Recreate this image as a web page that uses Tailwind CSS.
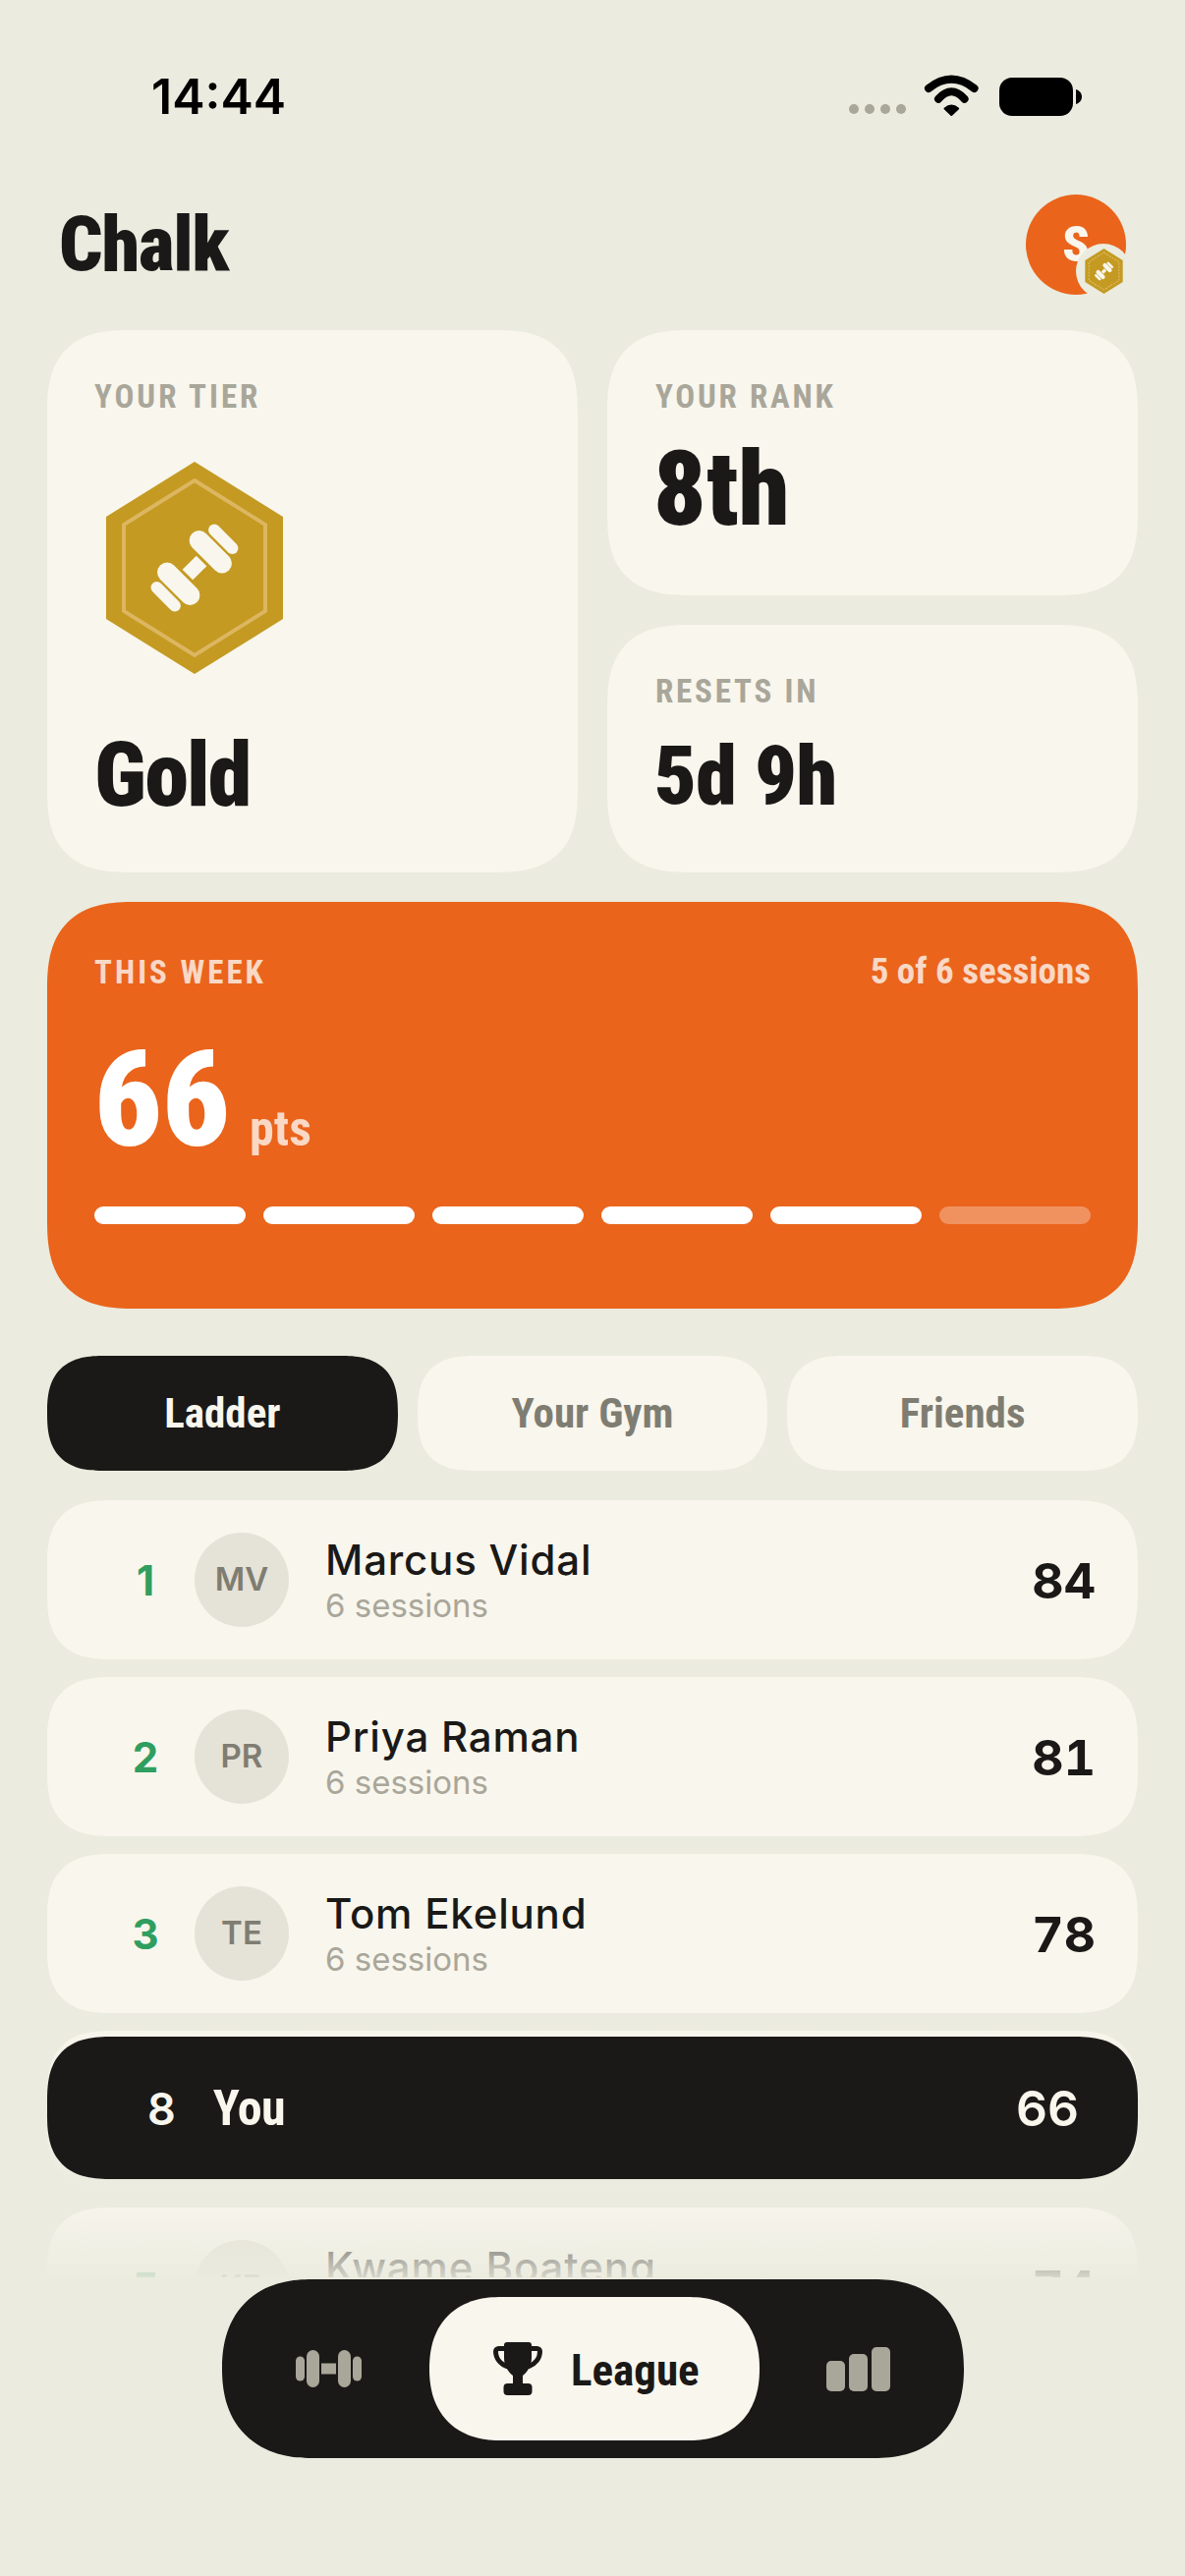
<!doctype html>
<html><head><meta charset="utf-8"><script src="https://cdn.jsdelivr.net/npm/@tailwindcss/browser@4"></script></head>
<body class="bg-[#ebebdf]">
<div class="h-[2622px] w-[1206px] overflow-hidden relative bg-[#ebebdf] font-['Inter',sans-serif] text-[#1a1917]">

  <!-- status bar -->
  <div class="h-[198px] relative">
    <div class="absolute left-[154px] top-[73px] text-[50px] leading-[50px] font-semibold text-black">14:44</div>
    <div class="absolute left-[864px] top-[75px] flex items-start">
      <div class="flex gap-[6px] mt-[31px] mr-[18px]">
        <span class="size-[10px] rounded-full bg-[#a9a69a]"></span><span class="size-[10px] rounded-full bg-[#a9a69a]"></span><span class="size-[10px] rounded-full bg-[#a9a69a]"></span><span class="size-[10px] rounded-full bg-[#a9a69a]"></span>
      </div>
      <svg width="58" height="44" viewBox="0 0 58 44" class="mt-0"><path d="M5 15Q28.3-3.6 51.6 15" fill="none" stroke="#000" stroke-width="8" stroke-linecap="round"/><path d="M15 25.7Q28.3 11 41.6 25.7" fill="none" stroke="#000" stroke-width="8" stroke-linecap="round"/><path d="M21.5 35.5Q28.3 29.5 35.2 35.5L28.3 42Z" fill="#000" stroke="#000" stroke-width="2" stroke-linejoin="round"/></svg>
      <div class="w-[75px] h-[39px] rounded-[13px] bg-black mt-[4px] ml-[19px]"></div>
      <svg width="6" height="15" viewBox="0 0 6 15" class="mt-[16px] ml-[3px]"><path d="M0 0c3.500 1 6 4 6 7.500S3.500 14 0 15Z" fill="#000"/></svg>
    </div>
  </div>

  <!-- header -->
  <header class="h-[102px] flex items-center justify-between pl-[60px] pr-[60px]">
    <h1 class="font-['Roboto',sans-serif] [font-stretch:75%] font-black text-[78px] leading-[78px] tracking-[-1.2px]">Chalk</h1>
    <div class="relative size-[102px] rounded-full bg-[#ea641c] flex items-center justify-center">
      <span class="font-['Roboto',sans-serif] [font-stretch:75%] font-black text-[50px] leading-none text-[#f8f6ed]">S</span>
      <div class="absolute left-[51px] top-[50px] size-[56px] rounded-full bg-[#ebebdf] flex items-center justify-center">
        <svg width="41" height="46" viewBox="0 0 180 216"><polygon points="90,0 180,56 180,160 90,216 0,160 0,56" fill="#c49a22"/><polygon points="90,19 162,64 162,152 90,197 18,152 18,64" fill="none" stroke="#e0bf6a" stroke-width="5" stroke-dasharray="9 6"/><g transform="rotate(-45 90 108)" fill="#f8f6ed"><rect x="80" y="100.500" width="20" height="15"/><rect x="103" y="81.500" width="20" height="53" rx="10"/><rect x="57" y="81.500" width="20" height="53" rx="10"/><rect x="125.400" y="89" width="12" height="38" rx="6"/><rect x="42.600" y="89" width="12" height="38" rx="6"/></g></svg>
      </div>
    </div>
  </header>

  <main class="px-[48px] mt-[36px]">
    <!-- stat cards -->
    <section class="grid grid-cols-2 gap-[30px]">
      <div class="h-[552px] rounded-[84px] [corner-shape:superellipse(1.4)] bg-[#f8f6ed] pl-[48px] pt-[51px] flex flex-col items-start">
        <p class="font-['Roboto',sans-serif] [font-stretch:75%] font-bold text-[33px] leading-[33px] tracking-[3px] text-[#a9a69a]">YOUR TIER</p>
        <svg width="180" height="216" viewBox="0 0 180 216" class="mt-[50px] ml-[12px]"><polygon points="90,0 180,56 180,160 90,216 0,160 0,56" fill="#c49a22"/><polygon points="90,19 162,64 162,152 90,197 18,152 18,64" fill="none" stroke="#dcb660" stroke-width="4"/><g transform="rotate(-45 90 108)" fill="#f8f6ed"><rect x="80" y="100.500" width="20" height="15"/><rect x="103" y="81.500" width="20" height="53" rx="10"/><rect x="57" y="81.500" width="20" height="53" rx="10"/><rect x="125.400" y="89" width="12" height="38" rx="6"/><rect x="42.600" y="89" width="12" height="38" rx="6"/></g></svg>
        <p class="mt-[59px] font-['Roboto',sans-serif] [font-stretch:75%] font-black text-[90px] leading-[90px] tracking-[-1.8px]">Gold</p>
      </div>
      <div class="flex flex-col gap-[30px]">
        <div class="h-[270px] rounded-[84px] [corner-shape:superellipse(1.4)] bg-[#f8f6ed] pl-[49px] pt-[51px]">
          <p class="font-['Roboto',sans-serif] [font-stretch:75%] font-bold text-[33px] leading-[33px] tracking-[2.8px] text-[#a9a69a]">YOUR RANK</p>
          <p class="mt-[26px] -ml-[2px] font-['Roboto',sans-serif] [font-stretch:75%] font-black text-[105px] leading-[105px]">8th</p>
        </div>
        <div class="h-[252px] rounded-[84px] [corner-shape:superellipse(1.4)] bg-[#f8f6ed] pl-[49px] pt-[51px]">
          <p class="font-['Roboto',sans-serif] [font-stretch:75%] font-bold text-[33px] leading-[33px] tracking-[2.8px] text-[#a9a69a]">RESETS IN</p>
          <p class="mt-[28px] -ml-[1px] font-['Roboto',sans-serif] [font-stretch:75%] font-black text-[84px] leading-[84px] tracking-[-0.6px]">5d 9h</p>
        </div>
      </div>
    </section>

    <!-- this week -->
    <section class="mt-[30px] h-[414px] rounded-[90px] [corner-shape:superellipse(1.4)] bg-[#ea641c] px-[48px] pt-[54px] font-['Roboto',sans-serif] [font-stretch:75%]">
      <div class="flex items-baseline justify-between">
        <p class="font-bold text-[33px] leading-[33px] tracking-[3px] text-white/75">THIS WEEK</p>
        <p class="font-bold text-[37px] leading-[33px] text-white/75">5 of 6 sessions</p>
      </div>
      <div class="mt-[47px] flex items-baseline gap-[20px]">
        <span class="font-black text-[135px] leading-[135px] text-white">66</span>
        <span class="font-bold text-[50px] leading-none text-white/75">pts</span>
      </div>
      <div class="mt-[40px] grid grid-cols-6 gap-[18px]">
        <span class="h-[18px] rounded-full bg-white"></span><span class="h-[18px] rounded-full bg-white"></span><span class="h-[18px] rounded-full bg-white"></span><span class="h-[18px] rounded-full bg-white"></span><span class="h-[18px] rounded-full bg-white"></span><span class="h-[18px] rounded-full bg-white/30"></span>
      </div>
    </section>

    <!-- tabs -->
    <nav class="mt-[48px] grid grid-cols-3 gap-[20px] font-['Roboto',sans-serif] [font-stretch:75%] font-bold text-[43px]">
      <div class="h-[117px] rounded-[60px] [corner-shape:superellipse(1.4)] bg-[#1a1917] text-[#f8f6ed] flex items-center justify-center">Ladder</div>
      <div class="h-[117px] rounded-[58.500px] [corner-shape:superellipse(1.4)] bg-[#f8f6ed] text-[#7f7d72] flex items-center justify-center">Your Gym</div>
      <div class="h-[117px] rounded-[58.500px] [corner-shape:superellipse(1.4)] bg-[#f8f6ed] text-[#7f7d72] flex items-center justify-center">Friends</div>
    </nav>

    <!-- ladder -->
    <section class="mt-[30px] flex flex-col gap-[18px]">
      <div class="h-[162px] rounded-[66px] [corner-shape:superellipse(1.4)] bg-[#f8f6ed] flex items-center pl-[70px] pr-[43px]">
        <span class="w-[60px] text-center text-[42px] font-bold text-[#2f9e5f]">1</span>
        <span class="ml-[20px] size-[96px] rounded-full bg-[#e5e2d7] flex items-center justify-center text-[33px] font-semibold text-[#7f7d72]">MV</span>
        <div class="ml-[37px] flex-1 pt-[2px]"><p class="text-[42px] leading-[48px] font-medium tracking-[0.8px]">Marcus Vidal</p><p class="mt-[2px] text-[33px] leading-[40px] text-[#a9a69a]">6 sessions</p></div>
        <span class="text-[50px] font-bold tabular-nums pt-[2px]">84</span>
      </div>
      <div class="h-[162px] rounded-[66px] [corner-shape:superellipse(1.4)] bg-[#f8f6ed] flex items-center pl-[70px] pr-[43px]">
        <span class="w-[60px] text-center text-[42px] font-bold text-[#2f9e5f]">2</span>
        <span class="ml-[20px] size-[96px] rounded-full bg-[#e5e2d7] flex items-center justify-center text-[33px] font-semibold text-[#7f7d72]">PR</span>
        <div class="ml-[37px] flex-1 pt-[2px]"><p class="text-[42px] leading-[48px] font-medium tracking-[0.8px]">Priya Raman</p><p class="mt-[2px] text-[33px] leading-[40px] text-[#a9a69a]">6 sessions</p></div>
        <span class="text-[50px] font-bold tabular-nums pt-[2px]">81</span>
      </div>
      <div class="h-[162px] rounded-[66px] [corner-shape:superellipse(1.4)] bg-[#f8f6ed] flex items-center pl-[70px] pr-[43px]">
        <span class="w-[60px] text-center text-[42px] font-bold text-[#2f9e5f]">3</span>
        <span class="ml-[20px] size-[96px] rounded-full bg-[#e5e2d7] flex items-center justify-center text-[33px] font-semibold text-[#7f7d72]">TE</span>
        <div class="ml-[37px] flex-1 pt-[2px]"><p class="text-[42px] leading-[48px] font-medium tracking-[0.8px]">Tom Ekelund</p><p class="mt-[2px] text-[33px] leading-[40px] text-[#a9a69a]">6 sessions</p></div>
        <span class="text-[50px] font-bold tabular-nums pt-[2px]">78</span>
      </div>
      <!-- row hidden behind the sticky "you" row -->
      <div class="h-[162px] relative rounded-[66px] [corner-shape:superellipse(1.4)] bg-[#f8f6ed]">
        <div class="absolute inset-0 -bottom-[2px] bg-gradient-to-b from-[#ebebdf]/10 to-[#ebebdf]"></div>
        <div class="absolute left-0 right-0 top-[6px] h-[145px] rounded-[66px] [corner-shape:superellipse(1.4)] bg-[#1a1917] text-[#f8f6ed] flex items-center pl-[102px] pr-[60px] pt-[2px]">
          <span class="text-[45px] font-semibold">8</span>
          <span class="ml-[38px] flex-1 font-['Roboto',sans-serif] [font-stretch:75%] font-bold text-[50px] tracking-[-0.6px]">You</span>
          <span class="text-[50px] font-semibold">66</span>
        </div>
      </div>
      <div class="h-[162px] rounded-[66px] [corner-shape:superellipse(1.4)] bg-[#f8f6ed] flex items-center pl-[70px] pr-[43px]">
        <span class="w-[60px] text-center text-[42px] font-bold text-[#2f9e5f]">5</span>
        <span class="ml-[20px] size-[96px] rounded-full bg-[#e5e2d7] flex items-center justify-center text-[33px] font-semibold text-[#7f7d72]">KB</span>
        <div class="ml-[37px] flex-1 pt-[2px]"><p class="text-[42px] leading-[48px] font-medium tracking-[0.9px]">Kwame Boateng</p><p class="mt-[2px] text-[33px] leading-[40px] text-[#a9a69a]">5 sessions</p></div>
        <span class="text-[50px] font-bold tabular-nums pt-[2px]">74</span>
      </div>
    </section>
  </main>

  <!-- fade + floating nav -->
  <div class="absolute left-0 right-0 top-[2232px] bottom-0 flex flex-col">
    <div class="h-[86px] bg-gradient-to-b from-[#ebebdf]/0 to-[#ebebdf]/90"></div>
    <div class="flex-1 bg-[#ebebdf]"></div>
  </div>
  <nav class="absolute left-[226px] top-[2320px] w-[755px] h-[182px] rounded-[91px] [corner-shape:superellipse(1.2)] bg-[#1a1917] flex items-center pl-[75px] gap-[69px]">
    <svg width="67" height="38" viewBox="0 0 67 38" fill="#a9a69a"><rect x="0" y="6.500" width="9" height="25" rx="4.500"/><rect x="11" y="0" width="13" height="38" rx="6.500"/><rect x="26" y="13.500" width="15" height="11"/><rect x="43" y="0" width="13" height="38" rx="6.500"/><rect x="58" y="6.500" width="9" height="25" rx="4.500"/></svg>
    <div class="w-[336px] h-[146px] rounded-[73px] [corner-shape:superellipse(1.2)] bg-[#f8f6ed] flex items-center pl-[65px] gap-[29px]">
      <svg width="50" height="54" viewBox="0 0 50 54" fill="#1a1917"><path d="M11 3a3 3 0 0 1 3-3h22a3 3 0 0 1 3 3v13c0 9-5 15-9 18v8H20v-8c-4-3-9-9-9-18z"/><rect x="10.500" y="42" width="29" height="12" rx="4"/><path d="M12 6.500H5.500a3 3 0 0 0-3 3c0 7 5 12.500 11 15M38 6.500h6.500a3 3 0 0 1 3 3c0 7-5 12.500-11 15" fill="none" stroke="#1a1917" stroke-width="5" stroke-linecap="round"/></svg>
      <span class="font-['Roboto',sans-serif] [font-stretch:75%] font-bold text-[45px] leading-none pt-[2px]">League</span>
    </div>
    <svg width="65" height="45" viewBox="0 0 65 45" fill="#a9a69a" class="-ml-[1px]"><rect x="0" y="14" width="19" height="31" rx="5"/><rect x="23" y="7" width="19" height="38" rx="5"/><rect x="46" y="0" width="19" height="45" rx="5"/></svg>
  </nav>
</div>
</body></html>
